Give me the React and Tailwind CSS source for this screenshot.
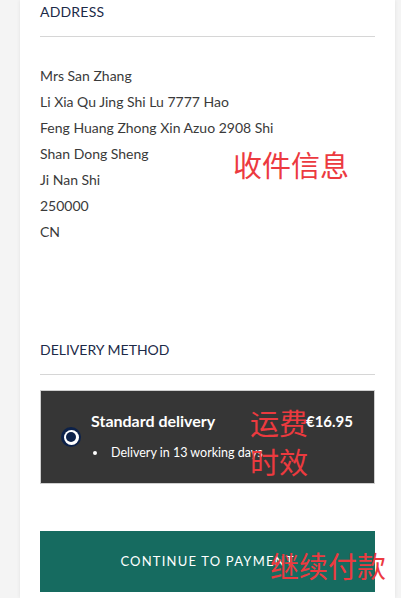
import React from "react";

const font = { fontFamily: '"Lato", "Noto Sans", sans-serif' };
const cjk = { fontFamily: '"Noto Sans CJK SC", sans-serif' };

export default function App() {
  return (
    <div className="w-[401px] h-[598px] bg-[#f4f4f4] overflow-hidden relative" style={font}>
      <div className="ml-[20px] w-[375px] h-[598px] bg-white shadow-[0_0_4px_rgba(0,0,0,0.08)] px-[20px] relative">
        <div className="pt-[2px] h-[37px] border-b border-[#d6d6d6] text-[14px] leading-[20px] text-[#1c2a48] tracking-[0.2px]">
          ADDRESS
        </div>
        <div className="pt-[26px] text-[14px] leading-[26px] text-[#3a3a3a]">
          <div>Mrs San Zhang</div>
          <div>Li Xia Qu Jing Shi Lu 7777 Hao</div>
          <div>Feng Huang Zhong Xin Azuo 2908 Shi</div>
          <div>Shan Dong Sheng</div>
          <div>Ji Nan Shi</div>
          <div>250000</div>
          <div>CN</div>
        </div>
        <div className="mt-[95px] h-[35px] border-b border-[#d6d6d6] text-[14px] leading-[20px] text-[#1c2a48]">
          DELIVERY METHOD
        </div>
        <div className="mt-[15px] h-[94px] bg-[#363636] border border-[#cfcfcf] flex items-center pl-[20px] pr-[21px]">
          <div className="w-[20px] h-[20px] rounded-full bg-[#0c2149] flex items-center justify-center shrink-0">
            <div className="w-[15px] h-[15px] rounded-full bg-white flex items-center justify-center">
              <div className="w-[10px] h-[10px] rounded-full bg-[#0c2149]" />
            </div>
          </div>
          <div className="ml-[10px] flex-1 flex flex-col pb-[2px]">
            <div className="flex justify-between items-center">
              <span className="text-white font-bold text-[16px] leading-[20px]">Standard delivery</span>
              <span className="text-white font-bold text-[15px] leading-[20px]">€16.95</span>
            </div>
            <div className="mt-[13px] flex items-center text-white text-[12.5px] leading-[18px]">
              <span className="w-[4px] h-[4px] rounded-full bg-white ml-[2px] mr-[14px]" />
              <span>Delivery in 13 working days</span>
            </div>
          </div>
        </div>
        <div className="mt-[47px] h-[61px] bg-[#166b60] flex items-center justify-center text-white text-[13px] tracking-[1.2px]">
          CONTINUE TO PAYMENT
        </div>
      </div>
      <div className="absolute left-[233px] top-[144px] text-[#ec3a3f] text-[29px] leading-[40px]" style={cjk}>收件信息</div>
      <div className="absolute left-[250px] top-[402px] text-[#ec3a3f] text-[29px] leading-[40px]" style={cjk}>运费</div>
      <div className="absolute left-[250px] top-[441px] text-[#ec3a3f] text-[29px] leading-[40px]" style={cjk}>时效</div>
      <div className="absolute left-[270px] top-[545px] text-[#ec3a3f] text-[29px] leading-[40px]" style={cjk}>继续付款</div>
    </div>
  );
}
